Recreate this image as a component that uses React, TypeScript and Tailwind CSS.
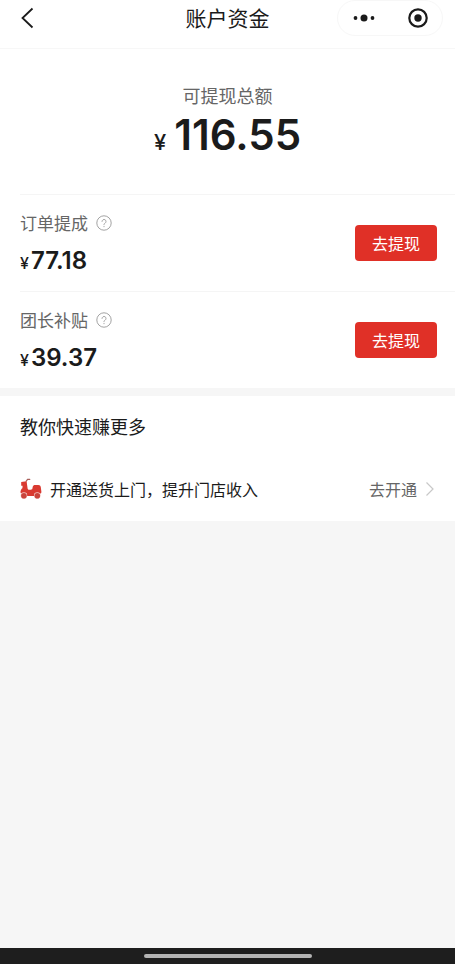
import React from "react";

type Fund = { id: string; name: string; amount: string };

const funds: Fund[] = [
  { id: "order", name: "订单提成", amount: "77.18" },
  { id: "leader", name: "团长补贴", amount: "39.37" },
];

function HelpIcon() {
  return (
    <svg width="16" height="16" viewBox="0 0 16 16" fill="none" stroke="#a3a3a3" aria-hidden="true">
      <circle cx="8" cy="8" r="7.2" />
      <path d="M6 6.4a2 2 0 1 1 3.1 1.7C8.3 8.600 8 8.900 8 9.700" strokeLinecap="round" />
      <circle cx="8" cy="11.700" r="0.400" fill="#a3a3a3" strokeWidth="0.400" />
    </svg>
  );
}

function ScooterIcon() {
  return (
    <svg width="22" height="22" viewBox="0 0 22 22" aria-hidden="true">
      <path d="M6.200 3.200 7.600 1.300h2.200" fill="none" stroke="#a9605a" strokeWidth="1.200" strokeLinecap="round" />
      <path
        d="M1.200 4 6.600 3.200 7.600 10.500c.2 1 .7 1.300 1.600 1.300h1.900c.8 0 1.200-.4 1.300-1.200l.3-1.600c.3-1.400 1.200-2 2.600-2h3c1.500 0 2.300.9 2.500 2.300l.6 4.500c.1 1.300-.5 2-1.700 2H2.200C.9 15.800.4 15 .5 13.800c.1-1.700.8-2.900 1.900-3.600L2.600 7.800H1.200z"
        fill="#d93a31"
      />
      <path d="M7 13h7.500v5H7z" fill="#d93a31" />
      <circle cx="3.900" cy="17.600" r="3.300" fill="#f3c9c6" />
      <circle cx="17.300" cy="17.600" r="3.300" fill="#f3c9c6" />
      <circle cx="3.900" cy="17.700" r="2.800" fill="#c9443c" />
      <circle cx="17.300" cy="17.700" r="2.800" fill="#c9443c" />
    </svg>
  );
}

export default function App() {
  return (
    <div className="flex min-h-screen flex-col bg-[#f6f6f6] font-['Noto_Sans_CJK_SC',sans-serif] text-[#1b1b1b]">
      <header className="grid h-12 grid-cols-[1fr_auto_1fr] items-start bg-white">
        <button type="button" aria-label="返回" className="flex h-9 w-12 items-center pl-5">
          <svg width="15" height="22" viewBox="0 0 15 22" fill="none" stroke="#1b1b1b" strokeWidth="1.800">
            <path d="M12.500 1.500 2.500 11l10 9.500" />
          </svg>
        </button>
        <h1 className="text-[21px] leading-[34px]">账户资金</h1>
        <div className="mr-3 flex h-9 w-[106px] items-center justify-between justify-self-end rounded-full border border-[#f7f7f7] pr-[14px] pl-[15px]">
          <button type="button" aria-label="更多">
            <svg width="22" height="22" viewBox="0 0 22 22" fill="#1b1b1b">
              <circle cx="2.500" cy="11" r="1.900" />
              <circle cx="11" cy="11" r="3.500" />
              <circle cx="19.500" cy="11" r="1.900" />
            </svg>
          </button>
          <button type="button" aria-label="关闭">
            <svg width="20" height="20" viewBox="0 0 20 20" fill="none">
              <circle cx="10" cy="10" r="8.700" stroke="#1b1b1b" strokeWidth="2.200" />
              <circle cx="10" cy="10" r="3.700" fill="#1b1b1b" />
            </svg>
          </button>
        </div>
      </header>

      <main className="flex-1">
        <section className="border-t border-[#f7f7f7] bg-white">
          <div className="flex flex-col items-center pt-8 pb-[33px]">
            <h2 className="text-[18px] leading-7 text-[#666]">可提现总额</h2>
            <p className="flex items-baseline gap-2 font-['Inter','Noto_Sans_CJK_SC',sans-serif] font-semibold">
              <span className="text-[22px] leading-none font-medium">¥</span>
              <span className="text-[42px] leading-[52px]">116.55</span>
            </p>
          </div>
          <ul>
            {funds.map((fund) => (
              <li key={fund.id} className="ml-5 flex h-[97px] items-center justify-between border-t border-[#f5f5f5] pr-[18px]">
                <div>
                  <div className="flex items-center gap-2">
                    <span className="text-[17px] leading-7 text-[#666]">{fund.name}</span>
                    <button type="button" aria-label={`${fund.name}说明`}>
                      <HelpIcon />
                    </button>
                  </div>
                  <p className="mt-2 flex items-baseline gap-0.5 font-['Inter','Noto_Sans_CJK_SC',sans-serif] font-semibold">
                    <span className="text-[16px] leading-none font-medium">¥</span>
                    <span className="text-[24px] leading-8">{fund.amount}</span>
                  </p>
                </div>
                <button type="button" className="h-9 w-[82px] rounded-[4px] bg-[#e03027] text-[16px] leading-[34px] text-white">
                  去提现
                </button>
              </li>
            ))}
          </ul>
        </section>

        <section className="mt-2 bg-white px-5 pt-4">
          <h2 className="text-[18px] leading-7">教你快速赚更多</h2>
          <a href="#delivery" className="mt-4 flex h-[65px] items-center">
            <ScooterIcon />
            <span className="ml-2 text-[16px]">开通送货上门，提升门店收入</span>
            <span className="ml-auto text-[16px] text-[#666]">去开通</span>
            <svg className="ml-2" width="10" height="16" viewBox="0 0 10 16" fill="none" stroke="#c8c8c8" strokeWidth="1.200" aria-hidden="true">
              <path d="M1.500 1.500 8 8l-6.500 6.500" />
            </svg>
          </a>
        </section>
      </main>

      <footer className="flex h-4 items-center justify-center bg-[#1e1e1e]">
        <div className="h-1 w-[168px] rounded-full bg-[#b4b4b4]" />
      </footer>
    </div>
  );
}
